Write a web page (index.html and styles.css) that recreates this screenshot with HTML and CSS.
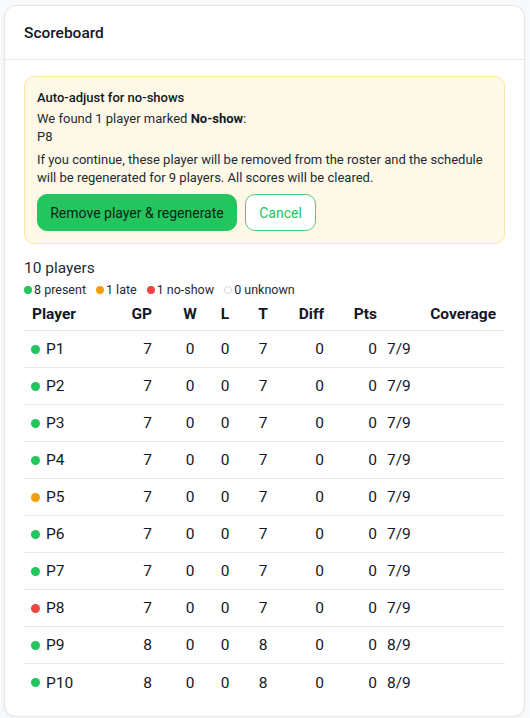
FILE: index.html
```html
<!DOCTYPE html>
<html lang="en">
<head>
<meta charset="utf-8">
<title>Scoreboard</title>
<link rel="stylesheet" href="styles.css">
</head>
<body>
<div class="card">
  <div class="card-header">Scoreboard</div>
  <div class="card-body">
    <div class="alert">
      <div class="alert-title">Auto-adjust for no-shows</div>
      <div class="alert-line">We found 1 player marked <b>No-show</b>:</div>
      <div class="alert-line">P8</div>
      <p class="alert-text">If you continue, these player will be removed from the roster and the schedule will be regenerated for 9 players. All scores will be cleared.</p>
      <div class="alert-actions">
        <button class="btn btn-primary">Remove player &amp; regenerate</button>
        <button class="btn btn-outline">Cancel</button>
      </div>
    </div>

    <div class="count">10 players</div>
    <div class="legend">
      <span class="legend-item"><span class="dot dot-present"></span>8 present</span>
      <span class="legend-item"><span class="dot dot-late"></span>1 late</span>
      <span class="legend-item"><span class="dot dot-noshow"></span>1 no-show</span>
      <span class="legend-item"><span class="dot dot-unknown"></span>0 unknown</span>
    </div>

    <div class="table">
      <div class="row head">
        <div class="c-player">Player</div>
        <div class="c-gp">GP</div>
        <div class="c-w">W</div>
        <div class="c-l">L</div>
        <div class="c-t">T</div>
        <div class="c-diff">Diff</div>
        <div class="c-pts">Pts</div>
        <div class="c-cov">Coverage</div>
      </div>
      <div class="row"><div class="c-player"><span class="dot dot-present"></span>P1</div><div class="c-gp">7</div><div class="c-w">0</div><div class="c-l">0</div><div class="c-t">7</div><div class="c-diff">0</div><div class="c-pts">0</div><div class="c-cov">7/9</div></div>
      <div class="row"><div class="c-player"><span class="dot dot-present"></span>P2</div><div class="c-gp">7</div><div class="c-w">0</div><div class="c-l">0</div><div class="c-t">7</div><div class="c-diff">0</div><div class="c-pts">0</div><div class="c-cov">7/9</div></div>
      <div class="row"><div class="c-player"><span class="dot dot-present"></span>P3</div><div class="c-gp">7</div><div class="c-w">0</div><div class="c-l">0</div><div class="c-t">7</div><div class="c-diff">0</div><div class="c-pts">0</div><div class="c-cov">7/9</div></div>
      <div class="row"><div class="c-player"><span class="dot dot-present"></span>P4</div><div class="c-gp">7</div><div class="c-w">0</div><div class="c-l">0</div><div class="c-t">7</div><div class="c-diff">0</div><div class="c-pts">0</div><div class="c-cov">7/9</div></div>
      <div class="row"><div class="c-player"><span class="dot dot-late"></span>P5</div><div class="c-gp">7</div><div class="c-w">0</div><div class="c-l">0</div><div class="c-t">7</div><div class="c-diff">0</div><div class="c-pts">0</div><div class="c-cov">7/9</div></div>
      <div class="row"><div class="c-player"><span class="dot dot-present"></span>P6</div><div class="c-gp">7</div><div class="c-w">0</div><div class="c-l">0</div><div class="c-t">7</div><div class="c-diff">0</div><div class="c-pts">0</div><div class="c-cov">7/9</div></div>
      <div class="row"><div class="c-player"><span class="dot dot-present"></span>P7</div><div class="c-gp">7</div><div class="c-w">0</div><div class="c-l">0</div><div class="c-t">7</div><div class="c-diff">0</div><div class="c-pts">0</div><div class="c-cov">7/9</div></div>
      <div class="row"><div class="c-player"><span class="dot dot-noshow"></span>P8</div><div class="c-gp">7</div><div class="c-w">0</div><div class="c-l">0</div><div class="c-t">7</div><div class="c-diff">0</div><div class="c-pts">0</div><div class="c-cov">7/9</div></div>
      <div class="row"><div class="c-player"><span class="dot dot-present"></span>P9</div><div class="c-gp">8</div><div class="c-w">0</div><div class="c-l">0</div><div class="c-t">8</div><div class="c-diff">0</div><div class="c-pts">0</div><div class="c-cov">8/9</div></div>
      <div class="row last"><div class="c-player"><span class="dot dot-present"></span>P10</div><div class="c-gp">8</div><div class="c-w">0</div><div class="c-l">0</div><div class="c-t">8</div><div class="c-diff">0</div><div class="c-pts">0</div><div class="c-cov">8/9</div></div>
    </div>
  </div>
</div>
</body>
</html>
```

FILE: styles.css
```css
* { box-sizing: border-box; }

html, body {
  margin: 0;
  background: #f8f9fa;
}

body {
  padding: 5px 5px 0 4px;
  font-family: Roboto, "Noto Sans", sans-serif;
  color: #1f2937;
}

.card {
  background: #ffffff;
  border: 1px solid #e3e5e8;
  border-radius: 12px;
  box-shadow: 0 1px 3px rgba(0, 0, 0, 0.06);
  height: 712px;
  overflow: hidden;
}

.card-header {
  height: 54px;
  padding: 0 19px;
  display: flex;
  align-items: center;
  font-size: 15.5px;
  font-weight: 500;
  color: #111827;
  border-bottom: 1px solid #e5e7eb;
}

.card-body {
  padding: 16px 19px;
}

.alert {
  background: #fef9e6;
  border: 1px solid #fbe7a0;
  border-radius: 10px;
  padding: 12px;
  font-size: 13px;
  line-height: 18px;
  color: #1f2937;
}

.alert-title {
  font-weight: 500;
  color: #111827;
  margin-bottom: 3px;
}

.alert-line b {
  font-weight: 700;
  color: #111827;
}

.alert-text {
  margin: 5px 0 0 0;
}

.alert-actions {
  display: flex;
  gap: 8px;
  margin-top: 7px;
}

.btn {
  height: 37px;
  border-radius: 10px;
  font-family: inherit;
  font-size: 14px;
  padding: 0;
  white-space: nowrap;
  cursor: pointer;
}

.btn-primary {
  width: 200px;
  background: #22c55e;
  border: 1px solid #22c55e;
  color: #0b1f14;
}

.btn-outline {
  width: 71px;
  background: #ffffff;
  border: 1px solid #4ccf7e;
  color: #22c55e;
}

.count {
  margin-top: 15px;
  font-size: 15.5px;
  line-height: 18px;
  color: #1f2937;
}

.legend {
  display: flex;
  gap: 10px;
  margin-top: 5px;
  font-size: 12.5px;
  line-height: 16px;
  color: #1f2937;
}

.legend-item {
  display: inline-flex;
  align-items: center;
}

.legend .dot {
  margin-right: 2px;
}

.dot {
  display: inline-block;
  width: 8px;
  height: 8px;
  border-radius: 50%;
  flex: none;
}

.row .dot {
  width: 9px;
  height: 9px;
}

.dot-present { background: #22c55e; }
.dot-late { background: #f59e0b; }
.dot-noshow { background: #ef4444; }
.dot-unknown {
  background: #ffffff;
  border: 1px solid #d1d5db;
}

.table {
  font-size: 15.5px;
}

.row {
  display: grid;
  grid-template-columns: 96px 52px 36px 34px 42px 48px 53px 1fr;
  align-items: center;
  height: 37px;
  border-bottom: 1px solid #e5e7eb;
  color: #111827;
}

.row.head {
  height: 33px;
  font-weight: 700;
}

.row.last {
  border-bottom: none;
}

.c-player {
  padding-left: 7px;
  display: flex;
  align-items: center;
  gap: 6px;
}

.row.head .c-player { padding-left: 8px; }

.c-gp { text-align: right; padding-right: 20px; }
.c-w, .c-l, .c-t { text-align: center; }
.c-diff, .c-pts { text-align: right; padding-right: 8px; }
.c-cov { padding-left: 2px; }
.row.head .c-cov { text-align: right; padding-right: 9px; padding-left: 0; }
```
